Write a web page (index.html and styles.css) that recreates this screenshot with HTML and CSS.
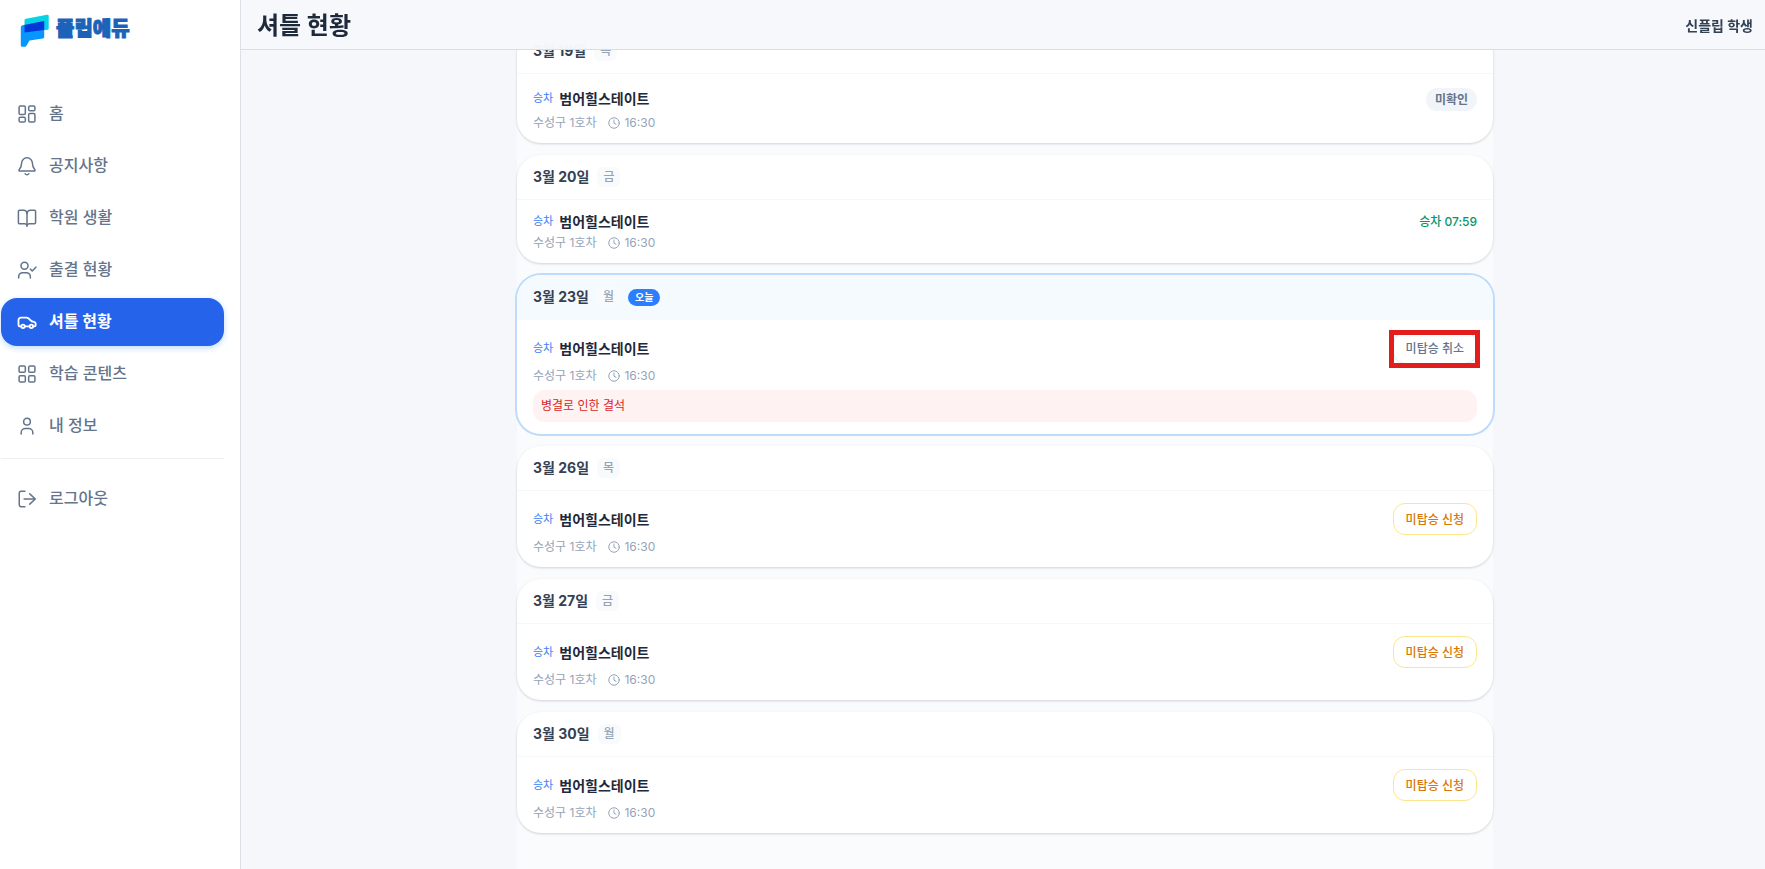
FILE: index.html
```html
<!DOCTYPE html>
<html lang="ko">
<head>
  <meta charset="UTF-8">
  <meta name="viewport" content="width=device-width, initial-scale=1.0">
  <title>셔틀 현황</title>
  <link rel="stylesheet" href="styles.css">
</head>
<body>
  <!-- 아이콘 모음 -->
  <svg class="sprite" aria-hidden="true">
    <symbol id="i-clock" viewBox="0 0 24 24"><circle cx="12" cy="12" r="10.5"/><path d="M12 6v6.5l4 2"/></symbol>
  </svg>

  <aside class="sidebar">
    <a class="logo" href="#">
      <svg width="30" height="34" viewBox="0 0 30 34" aria-hidden="true">
        <path d="M4.500 6.500q0-1.500 1.500-1.800L27 .8q1.700-.3 1.700 1.200v12.500q0 1.200-1.200 1.300L4.500 18z" fill="#06d3e4"/>
        <path d="M2.500 11.300L24.200 7v16q0 1.300-1.300 1.500L9.500 26.500 6.300 32q-.3.700-1.300.7H2q-1.200 0-1.200-1.500V13.200q0-1.600 1.700-1.900z" fill="#0796ff"/>
        <path d="M4.500 10.900L24.200 7v8.900L4.500 18.500z" fill="#0436d8"/>
      </svg>
      <span class="logo-text">플립에듀</span>
    </a>
    <nav class="menu">
      <a class="menu-item" href="#">
        <svg class="icon" viewBox="0 0 24 24"><rect x="2.500" y="2.500" width="7.500" height="10" rx="1.500"/><rect x="14" y="2.500" width="7.500" height="5.500" rx="1.500"/><rect x="14" y="11.500" width="7.500" height="10" rx="1.500"/><rect x="2.500" y="16" width="7.500" height="5.500" rx="1.500"/></svg>
        <span>홈</span>
      </a>
      <a class="menu-item" href="#">
        <svg class="icon" viewBox="0 0 24 24"><path d="M12 2.200a6.500 6.500 0 0 0-6.500 6.500c0 4-1.400 6-2.900 7.700-.5.700-.1 1.600.8 1.600h17.200c.9 0 1.300-.9.800-1.600-1.500-1.700-2.900-3.700-2.900-7.700A6.500 6.500 0 0 0 12 2.200z"/><path d="M9.800 21.300a2.500 2.500 0 0 0 4.400 0"/></svg>
        <span>공지사항</span>
      </a>
      <a class="menu-item" href="#">
        <svg class="icon" viewBox="0 0 24 24"><path d="M12 6.500v15"/><path d="M3 19a1.300 1.300 0 0 1-1.300-1.300V4A1.300 1.300 0 0 1 3 2.800h4.800A4.200 4.200 0 0 1 12 6.500a4.200 4.200 0 0 1 4.200-3.700H21A1.300 1.300 0 0 1 22.300 4v13.700A1.300 1.300 0 0 1 21 19h-6a3 3 0 0 0-3 2.500A3 3 0 0 0 9 19z"/></svg>
        <span>학원 생활</span>
      </a>
      <a class="menu-item" href="#">
        <svg class="icon" viewBox="0 0 24 24"><circle cx="9" cy="7" r="4.200"/><path d="M2 21.500V20a4.800 4.800 0 0 1 4.800-4.800h4.400A4.800 4.800 0 0 1 16 20v1.500"/><path d="M16 10.800l2.300 2.400 4.400-4.600"/></svg>
        <span>출결 현황</span>
      </a>
      <a class="menu-item active" href="#">
        <svg class="icon" viewBox="0 0 24 24"><path d="M4.800 17.300H3.400a1.600 1.600 0 0 1-1.600-1.600V9.800c0-1.800 1.200-3.100 3-3.100h6.600c.9 0 1.600.3 2.200.8l4 3.600 2.800.7c1.200.3 2 1.200 2 2.400v1.500a1.600 1.600 0 0 1-1.600 1.600h-1.100M9.500 17.300h5.200"/><circle cx="7.200" cy="17.200" r="2.100"/><circle cx="17.200" cy="17.200" r="2.100"/></svg>
        <span>셔틀 현황</span>
      </a>
      <a class="menu-item" href="#">
        <svg class="icon" viewBox="0 0 24 24"><rect x="2.500" y="2.500" width="7.500" height="7.500" rx="1.500"/><rect x="14" y="2.500" width="7.500" height="7.500" rx="1.500"/><rect x="14" y="14" width="7.500" height="7.500" rx="1.500"/><rect x="2.500" y="14" width="7.500" height="7.500" rx="1.500"/></svg>
        <span>학습 콘텐츠</span>
      </a>
      <a class="menu-item" href="#">
        <svg class="icon" viewBox="0 0 24 24"><circle cx="12" cy="6.800" r="4"/><path d="M5 21.500V20a5 5 0 0 1 5-5h4a5 5 0 0 1 5 5v1.500"/></svg>
        <span>내 정보</span>
      </a>
    </nav>
    <div class="menu-bottom">
      <button class="menu-item" type="button">
        <svg class="icon" viewBox="0 0 24 24"><path d="M9.500 2.800H5A2.300 2.300 0 0 0 2.700 5v14A2.300 2.300 0 0 0 5 21.200h4.500"/><path d="M8.500 12H22M15.300 5.800L22 12l-6.700 6.200"/></svg>
        <span>로그아웃</span>
      </button>
    </div>
  </aside>

  <div class="page">
    <header class="topbar">
      <h1>셔틀 현황</h1>
      <span class="user">신플립 학생</span>
    </header>

    <main class="content">
      <div class="list">
        <section class="card">
          <div class="card-head"><h2>3월 19일</h2><span class="day">목</span></div>
          <div class="card-body">
            <div class="stop-row">
              <p class="stop"><span class="kind">승차</span><strong>범어힐스테이트</strong></p>
              <span class="pill">미확인</span>
            </div>
            <p class="meta"><span>수성구 1호차</span><span class="time"><svg class="clock"><use href="#i-clock"/></svg>16:30</span></p>
          </div>
        </section>

        <section class="card">
          <div class="card-head"><h2>3월 20일</h2><span class="day">금</span></div>
          <div class="card-body">
            <div class="stop-row">
              <p class="stop"><span class="kind">승차</span><strong>범어힐스테이트</strong></p>
              <span class="boarded">승차 07:59</span>
            </div>
            <p class="meta"><span>수성구 1호차</span><span class="time"><svg class="clock"><use href="#i-clock"/></svg>16:30</span></p>
          </div>
        </section>

        <!-- 오늘 -->
        <section class="card today">
          <div class="card-head"><h2>3월 23일</h2><span class="day">월</span><span class="badge">오늘</span></div>
          <div class="card-body">
            <div class="stop-row">
              <p class="stop"><span class="kind">승차</span><strong>범어힐스테이트</strong></p>
              <div class="marked"><button class="btn btn-cancel" type="button">미탑승 취소</button></div>
            </div>
            <p class="meta"><span>수성구 1호차</span><span class="time"><svg class="clock"><use href="#i-clock"/></svg>16:30</span></p>
            <p class="reason">병결로 인한 결석</p>
          </div>
        </section>

        <section class="card">
          <div class="card-head"><h2>3월 26일</h2><span class="day">목</span></div>
          <div class="card-body">
            <div class="stop-row">
              <p class="stop"><span class="kind">승차</span><strong>범어힐스테이트</strong></p>
              <button class="btn" type="button">미탑승 신청</button>
            </div>
            <p class="meta"><span>수성구 1호차</span><span class="time"><svg class="clock"><use href="#i-clock"/></svg>16:30</span></p>
          </div>
        </section>

        <section class="card">
          <div class="card-head"><h2>3월 27일</h2><span class="day">금</span></div>
          <div class="card-body">
            <div class="stop-row">
              <p class="stop"><span class="kind">승차</span><strong>범어힐스테이트</strong></p>
              <button class="btn" type="button">미탑승 신청</button>
            </div>
            <p class="meta"><span>수성구 1호차</span><span class="time"><svg class="clock"><use href="#i-clock"/></svg>16:30</span></p>
          </div>
        </section>

        <section class="card">
          <div class="card-head"><h2>3월 30일</h2><span class="day">월</span></div>
          <div class="card-body">
            <div class="stop-row">
              <p class="stop"><span class="kind">승차</span><strong>범어힐스테이트</strong></p>
              <button class="btn" type="button">미탑승 신청</button>
            </div>
            <p class="meta"><span>수성구 1호차</span><span class="time"><svg class="clock"><use href="#i-clock"/></svg>16:30</span></p>
          </div>
        </section>
      </div>
    </main>
  </div>
</body>
</html>
```
FILE: styles.css
```css
* {
  box-sizing: border-box;
}
body {
  margin: 0;
  display: flex;
  min-height: 100vh;
  background: #f5f7fb;
  color: #1e293b;
  font-family: Inter, "Noto Sans CJK KR", sans-serif;
  font-size: 14px;
}
h1, h2, p {
  margin: 0;
}
button {
  font-family: inherit;
  cursor: pointer;
}
.sprite {
  position: absolute;
  width: 0;
  height: 0;
}

/* 사이드바 */
.sidebar {
  flex: 0 0 241px;
  padding: 14px 16px 0 1px;
  background: #fff;
  border-right: 1px solid #dce0e9;
}
.logo {
  display: flex;
  align-items: center;
  gap: 6px;
  height: 34px;
  padding-left: 19px;
  text-decoration: none;
}
.logo-text {
  padding-bottom: 4px;
  color: #1b62b8;
  font-size: 20px;
  line-height: 30px;
  font-weight: 900;
  -webkit-text-stroke: 1px #1b62b8;
}
.menu {
  display: flex;
  flex-direction: column;
  gap: 4px;
  margin-top: 42px;
}
.menu-item {
  display: flex;
  align-items: center;
  gap: 12px;
  width: 100%;
  height: 48px;
  padding: 0 16px;
  border: 0;
  border-radius: 16px;
  background: none;
  color: #64748b;
  font-size: 16px;
  line-height: 24px;
  font-weight: 500;
  text-decoration: none;
}
.menu-item span {
  padding-bottom: 2px;
}
.menu-item.active {
  background: #2563eb;
  color: #fff;
  font-weight: 700;
  box-shadow: 0 2px 6px #bfdbfe;
}
.icon {
  flex: none;
  width: 20px;
  height: 20px;
  overflow: visible;
  fill: none;
  stroke: currentColor;
  stroke-width: 1.8;
  stroke-linecap: round;
  stroke-linejoin: round;
}
.active .icon {
  stroke-width: 2.2;
}
.menu-bottom {
  margin-top: 8px;
  padding-top: 16px;
  border-top: 1px solid #eceef2;
}

/* 본문 */
.page {
  position: relative;
  flex: 1;
  min-width: 0;
}
.topbar {
  position: absolute;
  top: 0;
  left: 0;
  right: 0;
  z-index: 10;
  display: flex;
  align-items: center;
  justify-content: space-between;
  height: 50px;
  padding: 3px 12px 0 16px;
  background: rgba(246, 248, 251, 0.95);
  border-bottom: 1px solid #d8dde8;
  backdrop-filter: blur(12px);
}
.topbar h1 {
  font-size: 24px;
  line-height: 32px;
  font-weight: 700;
}
.user {
  color: #334155;
  line-height: 20px;
  font-weight: 700;
}
.content {
  min-height: 100vh;
  padding-left: 4px;
}
.list {
  display: flex;
  flex-direction: column;
  gap: 12px;
  max-width: 976px;
  min-height: 100vh;
  margin: 0 auto;
  padding: 29px 0 36px;
  background: #fafbfd;
}
.card {
  background: #fff;
  border-radius: 24px;
  overflow: hidden;
  box-shadow: 0 1px 3px rgba(15, 23, 42, 0.1), 0 1px 2px rgba(15, 23, 42, 0.08);
}
.card-head {
  display: flex;
  align-items: center;
  gap: 8px;
  height: 45px;
  padding: 0 16px;
  border-bottom: 1px solid #f6f7f9;
}
.card-head h2 {
  color: #334155;
  font-size: 14px;
  line-height: 20px;
  font-weight: 700;
}
.day {
  padding: 0 6px;
  border-radius: 6px;
  background: #f8fafc;
  color: #94a3b8;
  font-size: 12px;
  line-height: 20px;
  font-weight: 500;
}
.badge {
  padding: 0 7px;
  border-radius: 9px;
  background: #2b7fff;
  color: #fff;
  font-size: 10px;
  line-height: 17px;
  font-weight: 700;
}
.card-body {
  padding: 12px 16px;
}
.stop-row {
  display: flex;
  align-items: center;
  justify-content: space-between;
}
.stop {
  display: flex;
  align-items: center;
  gap: 6px;
  line-height: 19px;
}
.kind {
  color: #3b82f6;
  font-size: 11px;
}
.stop strong {
  font-size: 14px;
  font-weight: 700;
}
.pill {
  margin-top: 2px;
  padding: 0 9px;
  border-radius: 12px;
  background: #f1f5f9;
  color: #64748b;
  font-size: 12px;
  line-height: 23px;
  font-weight: 700;
}
.boarded {
  color: #059669;
  font-size: 12px;
  line-height: 19px;
  font-weight: 500;
}
.meta {
  display: flex;
  align-items: center;
  gap: 12px;
  margin-top: 4px;
  color: #94a3b8;
  font-size: 12px;
  line-height: 16px;
}
.time {
  display: flex;
  align-items: center;
  gap: 4px;
}
.clock {
  width: 12px;
  height: 12px;
  overflow: visible;
  fill: none;
  stroke: currentColor;
  stroke-width: 2;
  stroke-linecap: round;
  stroke-linejoin: round;
}
.btn {
  display: block;
  height: 32px;
  padding: 0 12px 2px;
  border: 1px solid #fde68a;
  border-radius: 12px;
  background: #fff;
  color: #d97706;
  font-size: 12px;
  font-weight: 500;
}
.btn-cancel {
  border-color: #e2e8f0;
  color: #64748b;
}

/* 오늘 카드 */
.today {
  box-shadow: 0 0 0 2px #bedbfb;
}
.today .card-head {
  background: #f5faff;
  border-bottom-color: #f5faff;
}
.reason {
  margin-top: 6px;
  padding: 0 8px;
  border-radius: 12px;
  background: #fef2f2;
  color: #dc2626;
  font-size: 12px;
  line-height: 32px;
}
.marked {
  position: relative;
}
.marked::after {
  content: "";
  position: absolute;
  inset: -2px -3px -4px -4px;
  border: 5px solid #e11d1d;
  pointer-events: none;
}
```
